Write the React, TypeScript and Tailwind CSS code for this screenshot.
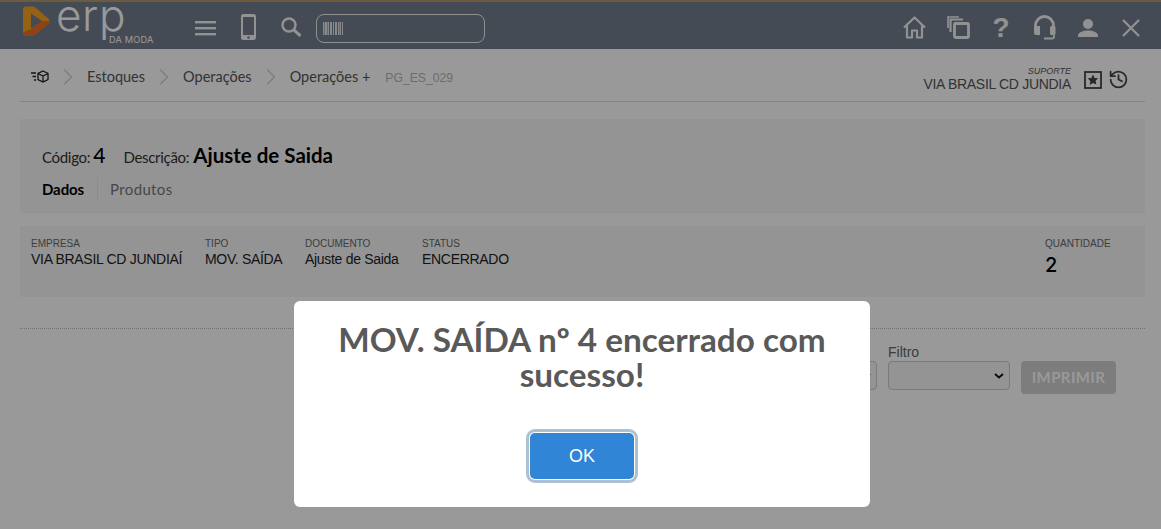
import { ChevronRight, History } from 'lucide-react';

const info = [
  { label: 'EMPRESA', value: 'VIA BRASIL CD JUNDIAÍ', width: 'w-[174px]' },
  { label: 'TIPO', value: 'MOV. SAÍDA', width: 'w-[100px]' },
  { label: 'DOCUMENTO', value: 'Ajuste de Saida', width: 'w-[117px]' },
  { label: 'STATUS', value: 'ENCERRADO', width: 'w-[120px]' },
];

function Logo() {
  return (
    <div className="relative h-[42px] w-[118px] shrink-0">
      <svg viewBox="0 0 27 30" className="absolute left-0 top-[-2px] h-[30px] w-[27px]">
        <path d="M3 0.5h6c1.5 0 2.6.5 3.8 1.4l12.5 10.6c1.6 1.4 1.6 3.6 0 5L12.8 28.1C11.6 29.1 10.500 29.500 9 29.500H3c-1.700 0-3-1.300-3-3v-23c0-1.700 1.300-3 3-3z" fill="#f9a21f" />
        <path d="M0 26.500c0 1.700 1.300 3 3 3h6c1.500 0 2.600-.4 3.800-1.400l12.500-10.600c.8-.7 1.200-1.600 1.200-2.500H18L8 23z" fill="#ee6f22" />
        <path d="M8 7.500l11 7.500-11 7.500z" fill="#737d8e" />
      </svg>
      <span className="absolute left-[33px] top-[-7px] font-['Inter',sans-serif] text-[44px] leading-[28px] font-light tracking-[0.6px] text-white">erp</span>
      <span className="absolute left-[86px] top-[27px] whitespace-nowrap font-['Inter',sans-serif] text-[9.200px] leading-[10px] tracking-[0.2px] text-white">DA MODA</span>
    </div>
  );
}

function Barcode() {
  return (
    <svg width="21" height="13" viewBox="0 0 21 13" className="text-white opacity-80">
      {[0, 2, 3, 5, 7, 8, 10, 12, 13, 15, 17, 19].map((x) => (
        <rect key={x} x={x} y="0" width={x % 3 === 0 ? 1.5 : 1} height="13" fill="currentColor" />
      ))}
    </svg>
  );
}

function MenuIcon() {
  return (
    <svg width="21" height="16" viewBox="0 0 21 16" fill="#f4f4f4" className="-mt-[1px] ml-[54px]">
      <rect y="1" width="21" height="2.400" />
      <rect y="7" width="21" height="2.400" />
      <rect y="13" width="21" height="2.400" />
    </svg>
  );
}

function PhoneIcon() {
  return (
    <svg width="15" height="26" viewBox="0 0 15 26" className="-mt-[3px] ml-[25px]">
      <path fillRule="evenodd" d="M2.500 0h10A2.500 2.500 0 0 1 15 2.500v21a2.500 2.500 0 0 1-2.500 2.500h-10A2.500 2.500 0 0 1 0 23.500v-21A2.500 2.500 0 0 1 2.500 0zM2 3v18h11V3z" fill="#f4f4f4" />
      <circle cx="7.500" cy="23.500" r="1.200" fill="#737d8e" />
    </svg>
  );
}

function SearchIcon() {
  return (
    <svg width="21" height="20" viewBox="0 0 21 20" fill="none" stroke="#f4f4f4" className="-mt-[3px] ml-[25px]">
      <circle cx="8" cy="8" r="6.500" strokeWidth="2.400" />
      <path d="M12.800 12.800L19.500 18.800" strokeWidth="3" />
    </svg>
  );
}

function HomeIcon() {
  return (
    <svg width="23" height="23" viewBox="0 0 23 23" fill="none" stroke="#f4f4f4" strokeWidth="2.200" strokeLinejoin="round">
      <path d="M1 11.500L11.500 1.500 22 11.500" />
      <path d="M4 9.500V21.500h5v-7h5v7h5V9.500" />
    </svg>
  );
}

function CopyIcon() {
  return (
    <svg width="23" height="23" viewBox="0 0 23 23" fill="none" stroke="#f4f4f4" strokeWidth="2.200" className="ml-[21px]">
      <rect x="7.500" y="7.500" width="14" height="14" strokeWidth="2.800" rx="1" />
      <path d="M3.500 16V3.500H16" />
      <path d="M1 12V1h11" strokeWidth="1.600" />
    </svg>
  );
}

function Headset() {
  return (
    <svg width="23" height="25" viewBox="0 0 23 25" fill="none" className="ml-[23px]">
      <path d="M2.500 12V10.500a9 9 0 0 1 18 0V12" stroke="#f4f4f4" strokeWidth="2.800" />
      <path d="M1 11h6v9H3a2 2 0 0 1-2-2z" fill="#f4f4f4" />
      <rect x="17" y="11" width="5.500" height="9" rx="1.500" fill="#f4f4f4" />
      <path d="M21 20v2a1.500 1.500 0 0 1-1.500 1.500H11" stroke="#f4f4f4" strokeWidth="1.800" />
    </svg>
  );
}

function UserIcon() {
  return (
    <svg width="20" height="18" viewBox="0 0 20 18" fill="#f4f4f4" className="ml-[22px]">
      <circle cx="10" cy="5" r="5" />
      <path d="M0 18v-1.500c0-3 5-5 10-5s10 2 10 5V18z" />
    </svg>
  );
}

function CloseIcon() {
  return (
    <svg width="18" height="18" viewBox="0 0 18 18" stroke="#f4f4f4" strokeWidth="2.200" className="ml-[24px]">
      <path d="M1 1l16 16M17 1L1 17" />
    </svg>
  );
}

function BoxIcon() {
  return (
    <svg width="20" height="13" viewBox="0 0 20 13" fill="none" stroke="#222" strokeWidth="1.300">
      <path d="M1 3h5M2.500 6.500h3.500M4 10h2" />
      <path d="M13 1l5 2.500v6l-5 2.500-5-2.500v-6zM8 3.500l5 2.500 5-2.500M13 6v6" />
    </svg>
  );
}

function StarBox() {
  return (
    <svg width="18" height="18" viewBox="0 0 18 18" className="mt-[6px]">
      <rect x="1" y="1" width="16" height="16" fill="none" stroke="#444" strokeWidth="1.800" />
      <path d="M9 3.500l1.600 3.400 3.700.4-2.700 2.500.7 3.700L9 12.100l-3.300 1.900.7-3.700L3.700 7.300l3.700-.4z" fill="#444" />
    </svg>
  );
}

function Crumb({ text }: { text: string }) {
  return (
    <>
      <ChevronRight size={28} strokeWidth={1} className="mx-[-1px] text-[#cfcfcf]" />
      <span className="mx-[6px] text-[14.500px] text-[#555]">{text}</span>
    </>
  );
}

export default function App() {
  return (
    <div className="relative h-[529px] w-[1161px] overflow-hidden bg-white font-['Liberation_Sans',sans-serif]">
      <header className="flex h-[49px] items-center border-t-2 border-[#b5986a] bg-[#737d8e] pt-[6px]">
        <div className="ml-[23px] flex items-center">
          <Logo />
          <MenuIcon />
          <PhoneIcon />
          <SearchIcon />
          <div className="ml-[14px] flex h-[29px] w-[169px] items-center rounded-[8px] border border-[#f0f0f0] pl-[6px]">
            <Barcode />
          </div>
        </div>
        <div className="mb-[2px] ml-auto mr-[21px] flex items-center">
          <HomeIcon />
          <CopyIcon />
          <span className="ml-[22px] w-[18px] text-center text-[28px] leading-none font-bold text-[#f4f4f4]">?</span>
          <Headset />
          <UserIcon />
          <CloseIcon />
        </div>
      </header>

      <div className="ml-[20px] mr-[16px] flex h-[53px] items-center border-b border-[#ddd] pt-[3px] font-['Lato',sans-serif]">
        <div className="ml-[10px] mr-[5px]"><BoxIcon /></div>
        <Crumb text="Estoques" />
        <Crumb text="Operações" />
        <Crumb text="Operações +" />
        <span className="ml-[9px] mt-[4px] font-['Liberation_Sans',sans-serif] text-[12.200px] text-[#b5b5b5]">PG_ES_029</span>
        <div className="ml-auto flex items-center">
          <div className="mr-[13px] mt-[5px] text-right font-['Liberation_Sans',sans-serif] text-[#555]">
            <div className="text-[9px] leading-[9px] italic">SUPORTE</div>
            <div className="text-[14px] leading-[16px] tracking-[-0.3px]">VIA BRASIL CD JUNDIA</div>
          </div>
          <StarBox />
          <History size={21} strokeWidth={2} className="ml-[6px] mr-[16px] mt-[6px] text-[#444]" />
        </div>
      </div>

      <section className="ml-[20px] mr-[16px] mt-[17px] h-[94px] bg-[#f7f7f7] pl-[22px] pt-[22px] font-['Lato',sans-serif]">
        <div className="flex items-baseline text-[#333]">
          <span className="text-[15px] tracking-[-0.3px]">Código:</span>
          <span className="ml-[3px] text-[21px] leading-[28px] font-medium text-black">4</span>
          <span className="ml-[18px] text-[15px] tracking-[-0.3px]">Descrição:</span>
          <span className="ml-[4px] text-[20.500px] leading-[28px] font-bold text-black">Ajuste de Saida</span>
        </div>
        <div className="mt-[9px] flex items-center text-[15px]">
          <span className="pr-[13px] font-bold tracking-[-0.1px] text-black">Dados</span>
          <span className="border-l border-[#e8e8e8] pl-[12px] tracking-[0.35px] text-[#777]">Produtos</span>
        </div>
      </section>

      <section className="ml-[20px] mr-[16px] mt-[13px] flex h-[71px] bg-[#f7f7f7] pl-[11px] pt-[13px]">
        {info.map((item) => (
          <div key={item.label} className={item.width}>
            <div className="text-[10px] leading-[10px] text-[#666]">{item.label}</div>
            <div className="mt-[2px] text-[14px] leading-[16px] tracking-[-0.3px] text-[#222]">{item.value}</div>
          </div>
        ))}
        <div className="ml-auto mr-[34px] w-[66px]">
          <div className="text-[10px] leading-[10px] text-[#666]">QUANTIDADE</div>
          <div className="mt-[3px] font-['Inter',sans-serif] text-[20px] leading-[26px] font-medium text-black">2</div>
        </div>
      </section>

      <div className="ml-[20px] mr-[16px] mt-[31px] border-b border-dotted border-[#bbb]" />

      <div className="mr-[45px] mt-[15px] flex justify-end">
        <div className="mr-[11px] mt-[17px] flex h-[29px] w-[120px] items-center justify-end rounded-[4px] border border-[#ccc] bg-[#f7f7f7] pr-[4px]">
          <svg width="12" height="8" viewBox="0 0 12 8" fill="none" stroke="#111" strokeWidth="2"><path d="M2 2l4 3.500L10 2" /></svg>
        </div>
        <div className="w-[122px]">
          <div className="text-[14px] leading-[16px] text-[#666]">Filtro</div>
          <div className="mt-[1px] flex h-[29px] items-center justify-end rounded-[4px] border border-[#ccc] bg-[#f7f7f7] pr-[4px]">
            <svg width="12" height="8" viewBox="0 0 12 8" fill="none" stroke="#111" strokeWidth="2"><path d="M2 2l4 3.500L10 2" /></svg>
          </div>
        </div>
        <button className="ml-[11px] mt-[17px] h-[33px] w-[95px] rounded-[4px] bg-[#d0d0d0] font-['Lato',sans-serif] text-[15px] font-bold tracking-[0.4px] text-white">
          IMPRIMIR
        </button>
      </div>

      <div className="absolute inset-0 flex items-start justify-center bg-black/40 pl-[3px] pt-[301px]">
        <div className="flex h-[206px] w-[576px] flex-col items-center rounded-[6px] bg-white pt-[21px]">
          <h2 className="w-[520px] text-center font-['Lato',sans-serif] text-[33.300px] leading-[35px] font-bold text-[#595959]">
            MOV. SAÍDA nº 4 encerrado com sucesso!
          </h2>
          <button className="mt-[41px] h-[46px] w-[104px] rounded-[5px] bg-[#3085d6] text-[18px] text-white shadow-[0_0_0_1px_#fff,0_0_0_4px_rgba(50,100,150,0.4)]">
            OK
          </button>
        </div>
      </div>
    </div>
  );
}
